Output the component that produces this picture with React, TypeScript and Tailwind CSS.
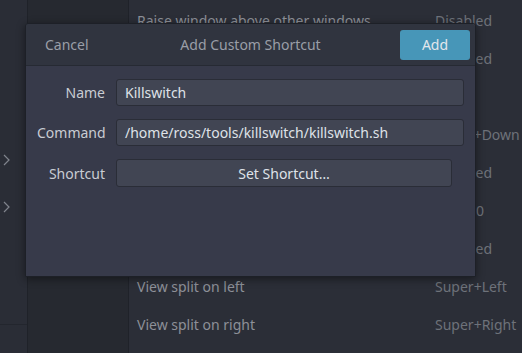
import React from "react";

const rows: [string, string][] = [
  ["Raise window above other windows", "Disabled"],
  ["", "Disabled"],
  ["", "Alt+F8"],
  ["", "Super+Down"],
  ["", "Disabled"],
  ["", "Alt+F10"],
  ["", "Disabled"],
  ["View split on left", "Super+Left"],
  ["View split on right", "Super+Right"],
];

function Chevron() {
  return (
    <svg width="7" height="12" viewBox="0 0 7 12" fill="none">
      <path d="M1 1 L6 6 L1 11" stroke="#80848d" strokeWidth="1.2" />
    </svg>
  );
}

export default function App() {
  return (
    <div
      className="relative w-[522px] h-[353px] overflow-hidden flex bg-[#2b2e37] text-[14px]"
      style={{ fontFamily: '"Noto Sans", "Open Sans", sans-serif' }}
    >
      <div className="w-[28px] h-full flex flex-col bg-[#2a2d36] border-r border-[#1f2229]">
        <div className="flex-1 flex flex-col pt-[154px] gap-[35px] pl-[3px]">
          <Chevron />
          <Chevron />
        </div>
        <div className="h-[29px] border-t border-[#23262e]" />
      </div>
      <div className="w-[101px] h-full bg-[#262930] border-r border-[#1f2229]" />
      <div className="flex-1 flex flex-col pt-[1px]">
        {rows.map(([a, b], i) => (
          <div key={i} className="h-[38px] flex items-center pl-[8px] whitespace-nowrap">
            <span className="text-[#8d9098] w-[298px] shrink-0">{a}</span>
            <span className="text-[#6e727a]">{b}</span>
          </div>
        ))}
      </div>

      <div className="absolute left-[25px] top-[23px] w-[451px] h-[254px] flex flex-col rounded-t-[3px] border border-[#1d2027] shadow-[0_2px_8px_rgba(0,0,0,0.45)] overflow-hidden">
        <div className="h-[42px] shrink-0 flex items-center justify-between px-[5px] bg-[#30343f] border-b border-[#262a33] relative">
          <span className="pl-[14px] text-[#9a9ea7]">Cancel</span>
          <span className="absolute left-0 right-0 text-center text-[#9a9ea7] pointer-events-none">
            Add Custom Shortcut
          </span>
          <button className="w-[70px] h-[30px] rounded-[3px] bg-[#4796b8] text-[#e2e6ec] relative">
            Add
          </button>
        </div>
        <div className="flex-1 bg-[#373a4a] pt-[13px] pl-[11px] pr-[11px] flex flex-col gap-[13px]">
          <div className="flex items-center gap-[11px]">
            <span className="w-[68px] text-right text-[#c9ccd3]">Name</span>
            <div className="flex-1 h-[27px] rounded-[3px] bg-[#414553] border border-[#2a2d37] flex items-center px-[8px] text-[#dfe2e8]">
              Killswitch
            </div>
          </div>
          <div className="flex items-center gap-[11px]">
            <span className="w-[68px] text-right text-[#c9ccd3]">Command</span>
            <div className="flex-1 h-[27px] rounded-[3px] bg-[#414553] border border-[#2a2d37] flex items-center px-[8px] text-[#dfe2e8]">
              /home/ross/tools/killswitch/killswitch.sh
            </div>
          </div>
          <div className="flex items-center gap-[11px]">
            <span className="w-[68px] text-right text-[#c9ccd3]">Shortcut</span>
            <div className="w-[336px] h-[28px] rounded-[3px] bg-[#414553] border border-[#2a2d37] flex items-center justify-center text-[#dfe2e8]">
              Set Shortcut…
            </div>
          </div>
        </div>
      </div>
    </div>
  );
}
